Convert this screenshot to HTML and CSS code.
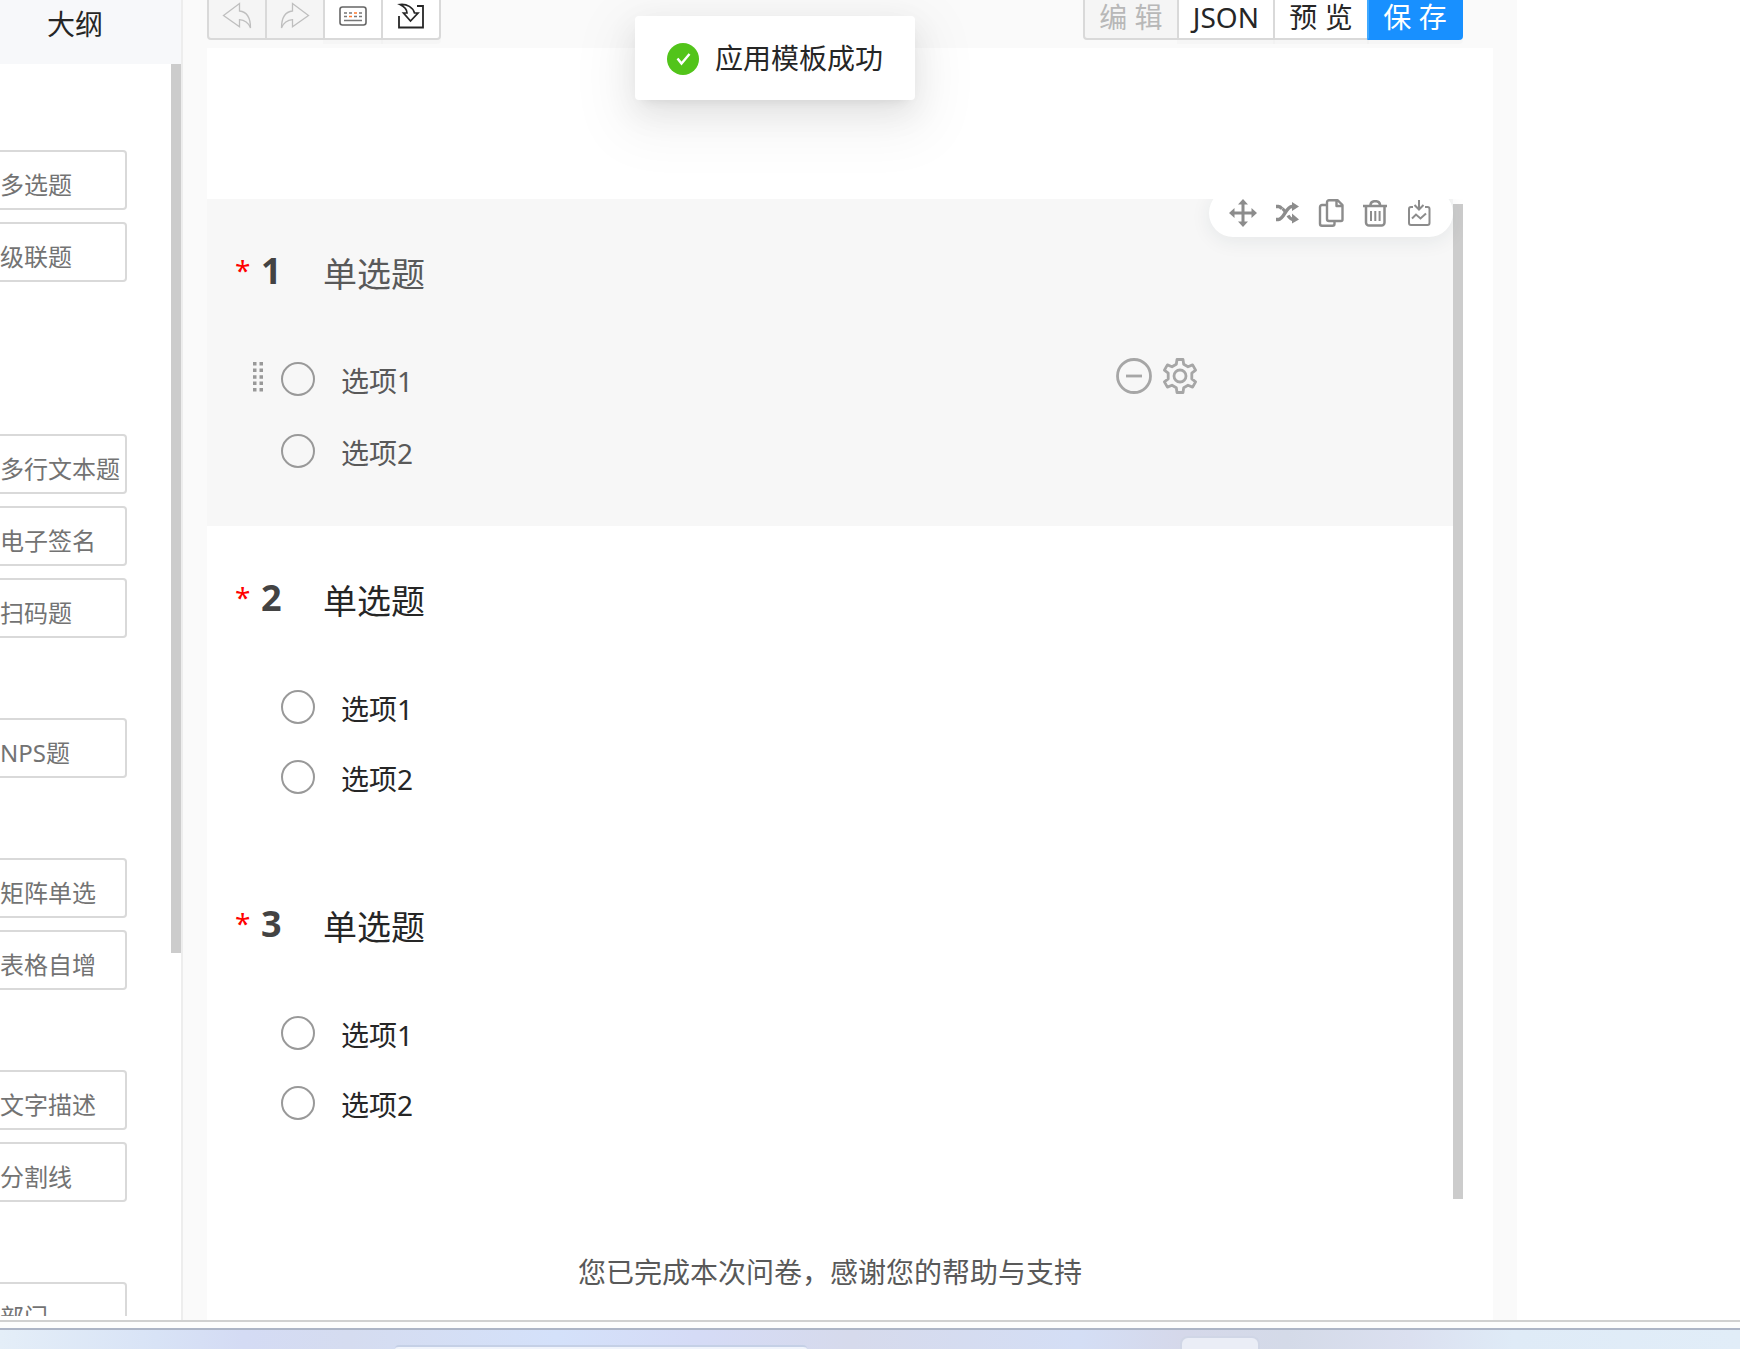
FILE: index.html
```html
<!DOCTYPE html>
<html lang="zh-CN">
<head>
<meta charset="utf-8">
<title>问卷编辑器</title>
<link rel="stylesheet" href="styles.css">
</head>
<body>
<div class="app">
  <aside class="sidebar">
    <header class="sidebar-head"><a class="tab" href="#outline">大纲</a></header>
    <div class="sidebar-body">
      <nav class="palette">
        <div class="group">
          <button class="item" type="button">多选题</button>
          <button class="item" type="button">级联题</button>
        </div>
        <div class="group group-after-blank">
          <button class="item" type="button">多行文本题</button>
          <button class="item" type="button">电子签名</button>
          <button class="item" type="button">扫码题</button>
        </div>
        <div class="group">
          <button class="item" type="button">NPS题</button>
        </div>
        <div class="group">
          <button class="item" type="button">矩阵单选</button>
          <button class="item" type="button">表格自增</button>
        </div>
        <div class="group">
          <button class="item" type="button">文字描述</button>
          <button class="item" type="button">分割线</button>
        </div>
        <div class="group">
          <button class="item" type="button">部门</button>
        </div>
      </nav>
      <div class="track"><div class="thumb thumb-side"></div></div>
    </div>
  </aside>

  <main class="editor">
    <div class="toolbar">
      <div class="btn-group">
        <button class="btn btn-icon" type="button" disabled aria-label="撤销">
          <svg width="30" height="28" viewBox="0 0 30 28" fill="none" stroke="#bfbfbf" stroke-width="1.3"><path d="M1.500 13.500 17.500 1.500v7.500c7 .8 11 6.500 11 17-2-5-5-8-11-8.300v7z"/></svg>
        </button>
        <button class="btn btn-icon" type="button" disabled aria-label="重做">
          <svg width="30" height="28" viewBox="0 0 30 28" fill="none" stroke="#bfbfbf" stroke-width="1.3"><path d="M28.500 13.500 12.500 1.500v7.500c-7 .8-11 6.500-11 17 2-5 5-8 11-8.300v7z"/></svg>
        </button>
        <button class="btn btn-icon" type="button" aria-label="快捷键">
          <svg width="28" height="22" viewBox="0 0 28 22" fill="none"><rect x="1" y="2" width="26" height="18" rx="2.500" stroke="#666" stroke-width="1.600"/><path d="M5 8h3M10 8h3M20 8h3M5 11.500h3M15 11.500h3M20 11.500h3M5 15.500h18" stroke="#777" stroke-width="1.400"/><path d="M15 8h3M10 11.500h3" stroke="#ff7a2e" stroke-width="1.600"/></svg>
        </button>
        <button class="btn btn-icon" type="button" aria-label="导入">
          <svg width="28" height="28" viewBox="0 0 28 28" fill="none" stroke="#262626"><path d="M2 14v11.500h24V4h-6" stroke-width="1.800"/><path d="M3 2.500c7-.8 13 3 14.500 8.500h3.500l-7.500 8-7-8H10C10 7.500 7 4.500 3 2.500z" stroke-width="1.700"/></svg>
        </button>
      </div>
      <div class="btn-group">
        <button class="btn" type="button" disabled>编 辑</button>
        <button class="btn" type="button">JSON</button>
        <button class="btn" type="button">预 览</button>
        <button class="btn btn-primary" type="button">保 存</button>
      </div>
    </div>

    <div class="paper">
      <div class="scroll">
        <div class="questions">
          <section class="question selected">
            <div class="q-head"><span class="star">*</span><span class="num">1</span><h2 class="title">单选题</h2></div>
            <div class="options">
              <div class="option">
                <span class="drag"><svg width="10" height="30" viewBox="0 0 10 30" fill="#999"><path d="M0 0h3.500v3.500H0zM6.500 0H10v3.500H6.500zM0 6.600h3.500v3.500H0zM6.500 6.600H10v3.500H6.500zM0 13.200h3.500v3.500H0zM6.500 13.200H10v3.500H6.500zM0 19.600h3.500v3.500H0zM6.500 19.600H10v3.500H6.500zM0 26h3.500v3.500H0zM6.500 26H10v3.500H6.500z"/></svg></span>
                <input type="radio" name="q1" id="q1a"><label for="q1a">选项1</label>
                <div class="option-tools">
                  <button class="tool" type="button" aria-label="删除选项"><svg width="36" height="36" viewBox="0 0 36 36" fill="none" stroke="#a6a6a6" stroke-width="2.800"><circle cx="18" cy="18" r="16.500"/><path d="M10 18h16"/></svg></button>
                  <button class="tool" type="button" aria-label="选项设置"><svg width="36" height="36" viewBox="0 0 36 36" fill="none" stroke="#a6a6a6" stroke-width="2.800" stroke-linejoin="round"><circle cx="18" cy="18" r="6"/><path d="M15 1.500h6l.7 4.800 4.300 2.500 4.600-1.900 3 5.200-3.800 3v5.800l3.800 3-3 5.200-4.600-1.900-4.300 2.500-.7 4.800h-6l-.7-4.800-4.300-2.500-4.600 1.900-3-5.200 3.800-3v-5.800l-3.800-3 3-5.200L10 8.800l4.300-2.500z"/></svg></button>
                </div>
              </div>
              <div class="option"><span class="drag"></span><input type="radio" name="q1" id="q1b"><label for="q1b">选项2</label></div>
            </div>
            <div class="actions">
              <button class="tool" type="button" aria-label="移动"><svg width="28" height="28" viewBox="0 0 28 28"><path d="M14 4v20M4 14h20" stroke="#8c8c8c" stroke-width="3"/><path d="M14 0l5 5.500H9zM14 28l5-5.500H9zM0 14l5.500-5v10zM28 14l-5.500-5v10z" fill="#8c8c8c"/></svg></button>
              <button class="tool" type="button" aria-label="逻辑"><svg width="28" height="28" viewBox="0 0 28 28"><path d="M3 7.500h2.500c1.500 0 2.500 1 3.500 2.300M3 20.500h2.500c5.500 0 7.500-13 13.500-13h2M15 16.500c1.500 2.500 3 4 5 4h1" fill="none" stroke="#8c8c8c" stroke-width="3.400"/><path d="M9.500 9.500l3.500 4" stroke="#8c8c8c" stroke-width="3"/><path d="M19 3l7 4.500-7 4.500zM19 14.500l7 6-7 4z" fill="#8c8c8c"/></svg></button>
              <button class="tool" type="button" aria-label="复制"><svg width="28" height="28" viewBox="0 0 28 28" fill="none" stroke="#8c8c8c" stroke-width="2.400" stroke-linejoin="round"><path d="M12 1.200h8.500L25.500 6v14.500a1.500 1.500 0 0 1-1.500 1.500H12a2 2 0 0 1-2-2V3.200a2 2 0 0 1 2-2zM19.500 1.200V7h6"/><path d="M10 6H5a2 2 0 0 0-2 2v16.800a2 2 0 0 0 2 2h10.500a2 2 0 0 0 2-2V22"/></svg></button>
              <button class="tool" type="button" aria-label="删除"><svg width="28" height="28" viewBox="0 0 28 28" fill="none" stroke="#8c8c8c" stroke-width="2.500"><path d="M2 7h24M9.500 7V5.500A4 4 0 0 1 13 2.200h2.500A4 4 0 0 1 19 5.500V7M5 7v16.500a3 3 0 0 0 3 3h12.500a3 3 0 0 0 3-3V7"/><path d="M10 12v10M14.300 12v10M18.600 12v10" stroke-width="2"/></svg></button>
              <button class="tool" type="button" aria-label="导出"><svg width="28" height="28" viewBox="0 0 28 28" fill="none" stroke="#8c8c8c" stroke-width="2"><path d="M8 8H6a2 2 0 0 0-2 2v14a2 2 0 0 0 2 2h16.500a2 2 0 0 0 2-2V10a2 2 0 0 0-2-2H20M14 1v9M9.500 6l4.500 4.500L18.500 6M7 19.500l4-4 4.500 4 5.500-5"/></svg></button>
            </div>
          </section>
          <section class="question">
            <div class="q-head"><span class="star">*</span><span class="num">2</span><h2 class="title">单选题</h2></div>
            <div class="options">
              <div class="option"><span class="drag"></span><input type="radio" name="q2" id="q2a"><label for="q2a">选项1</label></div>
              <div class="option"><span class="drag"></span><input type="radio" name="q2" id="q2b"><label for="q2b">选项2</label></div>
            </div>
          </section>
          <section class="question">
            <div class="q-head"><span class="star">*</span><span class="num">3</span><h2 class="title">单选题</h2></div>
            <div class="options">
              <div class="option"><span class="drag"></span><input type="radio" name="q3" id="q3a"><label for="q3a">选项1</label></div>
              <div class="option"><span class="drag"></span><input type="radio" name="q3" id="q3b"><label for="q3b">选项2</label></div>
            </div>
          </section>
        </div>
        <div class="track"><div class="thumb thumb-main"></div></div>
      </div>
      <p class="ending">您已完成本次问卷，感谢您的帮助与支持</p>
    </div>
  </main>

  <div class="side-space"></div>
</div>

<div class="window-edge"></div>
<footer class="taskbar">
  <div class="search"></div>
  <div class="task"></div>
</footer>

<div class="toast" role="status">
  <svg width="32" height="32" viewBox="0 0 32 32"><circle cx="16" cy="16" r="16" fill="#52c41a"/><path d="M10.500 15.500l4 5 8-9.500" fill="none" stroke="#fff" stroke-width="2.400"/></svg>
  <span>应用模板成功</span>
</div>
</body>
</html>
```
FILE: styles.css
```css
* { box-sizing: border-box; }

body {
  margin: 0;
  height: 100vh;
  display: flex;
  flex-direction: column;
  overflow: hidden;
  background: #fff;
  color: #262626;
  font: 28px/40px "Noto Sans", "Noto Sans CJK SC", sans-serif;
}

button { font: inherit; color: inherit; cursor: pointer; }
svg { display: block; flex: none; }

.app { flex: 1; min-height: 0; display: flex; }

/* component palette */
.sidebar {
  width: 183px;
  flex: none;
  display: flex;
  flex-direction: column;
  padding-bottom: 4px;
  border-right: 2px solid #ededed;
}
.sidebar-head { height: 64px; flex: none; padding: 4px 0 0 47px; background: #f7f8fa; }
.tab { color: inherit; text-decoration: none; }
.sidebar-body { flex: 1; min-height: 0; display: flex; justify-content: space-between; }
.palette {
  width: 127px;
  overflow: hidden;
  display: flex;
  flex-direction: column;
  gap: 80px;
  padding-top: 86px;
}
.group { display: flex; flex-direction: column; gap: 12px; }
.group-after-blank { padding-top: 72px; }
.item {
  height: 60px;
  flex: none;
  padding: 10px 0 0;
  border: 2px solid #d9d9d9;
  border-left: 0;
  border-radius: 0 4px 4px 0;
  background: #fff;
  color: #737373;
  font-size: 24px;
  line-height: 32px;
  text-align: left;
  white-space: nowrap;
}

.track { width: 10px; flex: none; }
.thumb { background: #ccc; }
.thumb-side { height: 71%; }
.thumb-main { height: 100%; }

/* editor */
.editor {
  flex: 1;
  min-width: 0;
  display: flex;
  flex-direction: column;
  padding: 0 24px;
  background: #fafafa;
}
.toolbar {
  height: 48px;
  flex: none;
  display: flex;
  justify-content: space-between;
  align-items: flex-end;
  padding: 0 30px 8px 0;
  overflow: hidden;
}
.btn-group { display: flex; }
.btn {
  height: 48px;
  min-width: 96px;
  display: flex;
  align-items: center;
  justify-content: center;
  padding: 2px 14px 0;
  border: 2px solid #d9d9d9;
  background: #fff;
  box-shadow: 0 4px 0 rgba(0, 0, 0, .016);
  white-space: nowrap;
}
.btn + .btn { margin-left: -2px; }
.btn:first-child { border-radius: 4px 0 0 4px; }
.btn:last-child { border-radius: 0 4px 4px 0; }
.btn:disabled { background: #f5f5f5; color: #b8b8b8; box-shadow: none; }
.btn-icon { width: 60px; min-width: 0; padding: 0; }
.btn-primary {
  border-color: #1890ff;
  border-left-color: #40a9ff;
  background: #1890ff;
  color: #fff;
}

.paper {
  flex: 1;
  min-height: 0;
  display: flex;
  flex-direction: column;
  padding: 151px 30px 0 0;
  background: #fff;
}
.scroll { flex: 1; min-height: 0; display: flex; overflow: hidden; }
.scroll .track { padding-top: 5px; }
.questions { flex: 1; min-width: 0; }
.question { position: relative; }
.q-head { height: 144px; display: flex; padding: 51px 0 0 28px; line-height: 48px; }
.star { width: 26px; color: #f00; line-height: 40px; }
.num { width: 62px; color: #434343; font-size: 36px; font-weight: 700; line-height: 42px; }
.title { margin: 0; font-size: 34px; font-weight: 400; }
.options { padding: 2px 0 40px; }
.option { height: 70px; display: flex; align-items: center; padding: 0 255px 0 46px; }
.option label { padding-top: 3px; }
.drag { width: 10px; margin-right: 18px; padding-bottom: 4px; }
.option input {
  appearance: none;
  width: 34px;
  height: 34px;
  flex: none;
  margin: 0 26px 0 0;
  border: 2px solid #999;
  border-radius: 50%;
  background: #fff;
}
.option-tools { display: flex; gap: 10px; margin-left: auto; padding-bottom: 6px; }
.tool { padding: 0; border: 0; background: none; }

.selected { background: #f7f7f7; color: #595959; }
.selected .options { padding: 0 0 39px; }
.selected .option { height: 72px; }
.selected input { background: #f7f7f7; }

.actions {
  position: absolute;
  top: -10px;
  right: 0;
  height: 48px;
  display: flex;
  align-items: center;
  gap: 16px;
  padding: 0 20px;
  border-radius: 24px;
  background: #fff;
  box-shadow: 0 4px 20px rgba(31, 45, 61, .08);
}

.ending {
  height: 121px;
  flex: none;
  margin: 0;
  padding: 53px 10px 0 0;
  color: #595959;
  text-align: center;
}

.side-space { width: 223px; flex: none; }

/* bottom of the window and the desktop taskbar */
.window-edge {
  height: 8px;
  flex: none;
  border-top: 2px solid #d0d0d0;
  background: #fdfdfd;
}
.taskbar {
  height: 21px;
  flex: none;
  display: flex;
  align-items: flex-end;
  overflow: hidden;
  padding-left: 395px;
  border-top: 2px solid #adb5c6;
  background: linear-gradient(90deg, #e4eef8, #d8e3f6 9%, #d4dbf4 14%, #d5dcf0 20%, #d4e1fa 32%, #d5dbf6 40%, #d6daec 49%, #d4def5 62%, #d5d8ea 68%, #d4dae8 74%, #dbe0f0 81%, #dfebf7 87%, #e1edf8);
}
.search {
  width: 412px;
  height: 4px;
  border-top: 2px solid #c5d0e6;
  border-radius: 24px 24px 0 0;
  background: #f0f4fc;
}
.task {
  width: 76px;
  height: 11px;
  margin-left: 375px;
  border-radius: 6px 6px 0 0;
  background: #eaedf6;
  box-shadow: 0 0 0 2px #d0d6e6;
}

.toast {
  position: absolute;
  top: 16px;
  left: 635px;
  height: 84px;
  display: flex;
  align-items: center;
  gap: 16px;
  padding: 0 32px;
  border-radius: 4px;
  background: #fff;
  box-shadow: 0 6px 12px -8px rgba(0, 0, 0, .12), 0 12px 32px rgba(0, 0, 0, .08), 0 18px 56px 16px rgba(0, 0, 0, .05);
}
.toast svg { margin-top: 2px; }
```
